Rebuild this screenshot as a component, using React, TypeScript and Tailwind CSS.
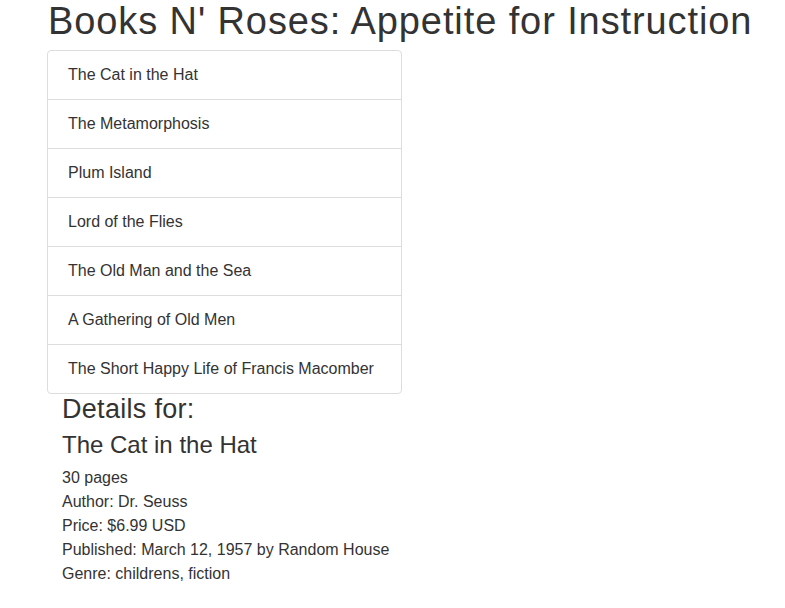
import React, { useState } from "react";

interface Book {
  title: string;
  pages: number;
  author: string;
  price: string;
  published: string;
  publisher: string;
  genre: string;
}

const books: Book[] = [
  { title: "The Cat in the Hat", pages: 30, author: "Dr. Seuss", price: "6.99", published: "March 12, 1957", publisher: "Random House", genre: "childrens, fiction" },
  { title: "The Metamorphosis", pages: 201, author: "Franz Kafka", price: "8.99", published: "1915", publisher: "Kurt Wolff Verlag", genre: "fiction" },
  { title: "Plum Island", pages: 574, author: "Nelson DeMille", price: "9.99", published: "1997", publisher: "Warner Books", genre: "mystery, fiction" },
  { title: "Lord of the Flies", pages: 224, author: "William Golding", price: "7.99", published: "1954", publisher: "Faber and Faber", genre: "fiction" },
  { title: "The Old Man and the Sea", pages: 127, author: "Ernest Hemingway", price: "10.99", published: "1952", publisher: "Scribner", genre: "fiction" },
  { title: "A Gathering of Old Men", pages: 213, author: "Ernest J. Gaines", price: "11.99", published: "1983", publisher: "Knopf", genre: "fiction" },
  { title: "The Short Happy Life of Francis Macomber", pages: 40, author: "Ernest Hemingway", price: "4.99", published: "1936", publisher: "Cosmopolitan", genre: "short story, fiction" },
];

const App: React.FC = () => {
  const [selected, setSelected] = useState<Book>(books[0]);

  return (
    <div className="min-h-screen bg-white text-[#333] font-['Liberation_Sans',Arial,sans-serif] pl-[47px]">
      <h1 className="text-[38px] leading-[40px] tracking-[0.9px] pt-[1px] pl-px m-0">
        Books N' Roses: Appetite for Instruction
      </h1>
      <div className="w-[355px] mt-[9px] border border-[#ddd] rounded">
        {books.map((b, i) => (
          <div
            key={b.title}
            onClick={() => setSelected(b)}
            className={`flex items-center px-5 text-[16px] cursor-pointer ${i > 0 ? "border-t border-[#ddd] h-[49px]" : "h-[48px]"}`}
          >
            {b.title}
          </div>
        ))}
      </div>
      <div className="pl-[15px]">
        <h3 className="text-[27px] leading-[30px] tracking-[0.3px]">Details for:</h3>
        <h4 className="text-[24px] leading-[28px] mt-[7px]">{selected.title}</h4>
        <div className="text-[16px] leading-[24px] mt-[7px]">
          <div>{selected.pages} pages</div>
          <div>Author: {selected.author}</div>
          <div>Price: ${selected.price} USD</div>
          <div>Published: {selected.published} by {selected.publisher}</div>
          <div>Genre: {selected.genre}</div>
        </div>
      </div>
    </div>
  );
};

export default App;
